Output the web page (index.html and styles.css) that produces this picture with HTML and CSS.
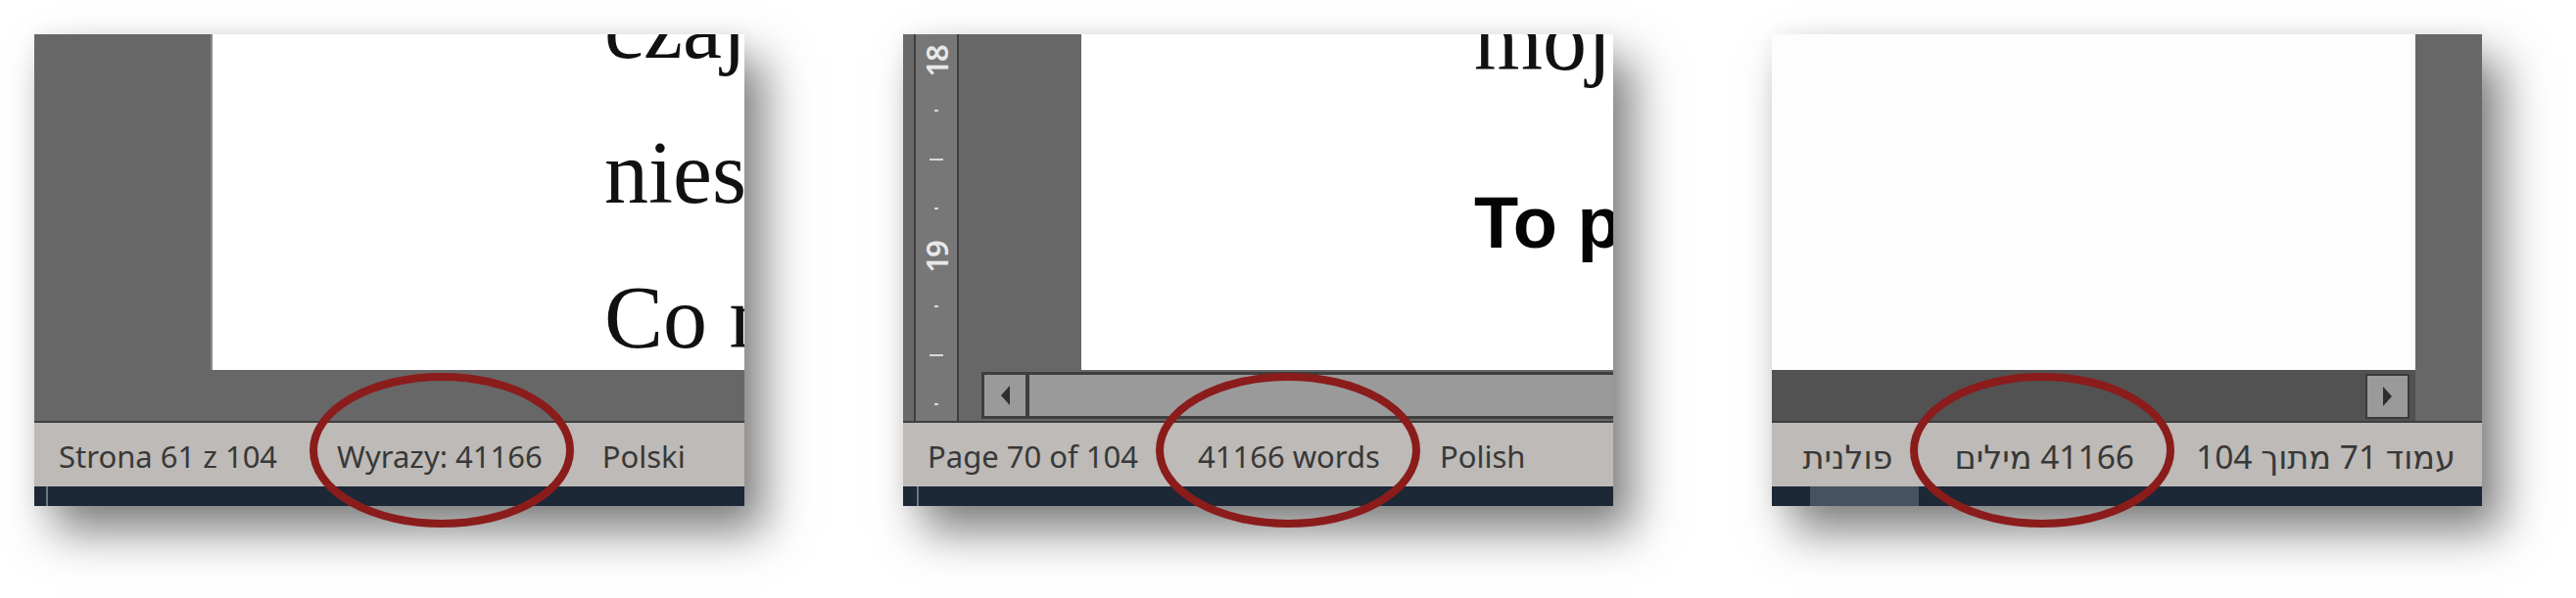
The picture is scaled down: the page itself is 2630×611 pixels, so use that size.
FILE: index.html
```html
<!DOCTYPE html>
<html lang="pl">
<head>
    <meta charset="UTF-8">
    <title>Word count in the status bar</title>
    <link rel="stylesheet" href="styles.css">
</head>
<body>

    <div class="strip">

        <!-- Polish UI -->
        <div class="shot">
            <div class="canvas canvas-pl">
                <div class="gutter"></div>
                <div class="page">
                    <p>czajnik</p>
                    <p>niespodziewanie</p>
                    <p>Co ma</p>
                </div>
                <div class="below"></div>
            </div>
            <div class="status">
                <span>Strona 61 z 104</span>
                <span>Wyrazy: 41166</span>
                <span>Polski</span>
            </div>
            <div class="taskbar"><i class="tick"></i></div>
            <svg class="ring" viewBox="0 0 270 158"><ellipse cx="135" cy="79" rx="131" ry="75"/></svg>
        </div>

        <!-- English UI -->
        <div class="shot">
            <div class="canvas canvas-en">
                <div class="edge"></div>
                <div class="ruler">
                    <span class="num">18</span>
                    <span class="dot"></span>
                    <span class="dash"></span>
                    <span class="dot"></span>
                    <span class="num">19</span>
                    <span class="dot"></span>
                    <span class="dash"></span>
                    <span class="dot"></span>
                </div>
                <div class="work">
                    <div class="work-top">
                        <div class="gutter-en"></div>
                        <div class="page">
                            <p>mojego</p>
                            <h4>To pytanie</h4>
                        </div>
                    </div>
                    <div class="work-bottom">
                        <div class="hscroll">
                            <div class="arrow arrow-left"></div>
                            <div class="track"></div>
                        </div>
                    </div>
                </div>
            </div>
            <div class="status">
                <span>Page 70 of 104</span>
                <span>41166 words</span>
                <span>Polish</span>
            </div>
            <div class="taskbar taskbar-en"><i class="tick"></i></div>
            <svg class="ring ring-en" viewBox="0 0 270 158"><ellipse cx="135" cy="79" rx="131" ry="75"/></svg>
        </div>

        <!-- Hebrew UI -->
        <div class="shot">
            <div class="canvas canvas-he">
                <div class="page blank"></div>
                <div class="gutter-he"></div>
                <div class="hscroll-he">
                    <div class="arrow arrow-right"></div>
                </div>
                <div class="corner-he"></div>
            </div>
            <div class="status status-he" dir="rtl">
                <span>עמוד 71 מתוך 104</span>
                <span>41166 מילים</span>
                <span>פולנית</span>
            </div>
            <div class="taskbar"><i class="task-btn"></i></div>
            <svg class="ring ring-he" viewBox="0 0 270 158"><ellipse cx="135" cy="79" rx="131" ry="75"/></svg>
        </div>

    </div>

</body>
</html>
```

FILE: styles.css
```css
html, body {
    height: 100%;
}
body {
    margin: 0;
    min-height: 611px;
    background-color: white;
}
.strip {
    display: flex;
    gap: 162px;
    padding: 35px 0 0 35px;
}
.shot {
    position: relative;
    width: 725px;
    flex: none;
    box-shadow: 20px 26px 44px rgba(0, 0, 0, 0.5), 0 0 18px rgba(0, 0, 0, 0.05);
}

/* document area */
.canvas {
    height: 395px;
    overflow: hidden;
    background-color: #676767;
    border-bottom: 2px solid #3e3e3e;
}
.page {
    height: 343px;
    background-color: white;
    overflow: hidden;
    padding-left: 400px;
    box-sizing: border-box;
}
.page p {
    margin: 0;
    font-family: "Liberation Serif", serif;
    font-size: 90px;
    line-height: 148px;
    color: #111;
    white-space: nowrap;
}
.page p:first-child {
    margin-top: -80px;
}

.canvas-pl {
    display: grid;
    grid-template-columns: 182px 1fr;
    grid-template-rows: 343px 1fr;
}
.canvas-pl .gutter {
    border-right: 2px solid #8a8a8a;
}
.canvas-pl .below {
    grid-column: 1 / 3;
}

/* english: ruler + scrollbar */
.canvas-en {
    display: flex;
}
.edge {
    width: 11px;
    flex: none;
    border-right: 2px solid #3e3e3e;
    background-color: #6a6a6a;
}
.ruler {
    width: 42px;
    flex: none;
    border-right: 2px solid #3e3e3e;
    background-color: #777;
    display: flex;
    flex-direction: column;
    align-items: center;
    padding-top: 3px;
}
.ruler span {
    height: 50px;
    flex: none;
    display: flex;
    align-items: center;
    justify-content: center;
}
.ruler .num {
    width: 42px;
    font-family: "Noto Sans", sans-serif;
    font-size: 31px;
    font-weight: 600;
    letter-spacing: -2px;
    color: #e8e8e8;
    transform: rotate(-90deg);
}
.ruler .dot::before,
.ruler .dash::before {
    content: "";
    display: block;
    height: 2px;
    background-color: #d8d8d8;
}
.ruler .dot::before {
    width: 4px;
}
.ruler .dash::before {
    width: 14px;
}
.work {
    flex: 1;
    min-width: 0;
    display: flex;
    flex-direction: column;
}
.work-top {
    display: flex;
    height: 343px;
}
.gutter-en {
    width: 125px;
    flex: none;
}
.work-top .page {
    flex: 1;
    min-width: 0;
    padding-left: 401px;
}
.page h4 {
    margin: 0;
    font-family: "Liberation Sans", Arial, sans-serif;
    font-weight: bold;
    font-size: 74px;
    line-height: 100px;
    margin-top: 63px;
    color: #050505;
    white-space: nowrap;
}
.work-top .page p:first-child {
    margin-top: -68px;
}
.work-bottom {
    flex: 1;
    padding: 2px 0 0 23px;
}
.hscroll {
    height: 48px;
    display: flex;
    gap: 4px;
    background-color: #3e3e3e;
    border: 3px solid #3e3e3e;
    border-right: none;
    box-sizing: border-box;
}
.arrow {
    width: 42px;
    flex: none;
    background-color: #9a9a9a;
    display: flex;
    align-items: center;
    justify-content: center;
}
.arrow::before {
    content: "";
    border-top: 10px solid transparent;
    border-bottom: 10px solid transparent;
}
.arrow-left::before {
    border-right: 9px solid #2e2e2e;
}
.arrow-right::before {
    border-left: 9px solid #2e2e2e;
}
.track {
    flex: 1;
    background-color: #9a9a9a;
}

/* hebrew: page on the left, scrollbar arrow on the right */
.canvas-he {
    display: grid;
    grid-template-columns: 657px 1fr;
    grid-template-rows: 343px 1fr;
}
.page.blank {
    background-color: #fdfdfd;
}
.hscroll-he {
    background-color: #525252;
    display: flex;
    justify-content: flex-end;
    padding: 4px 6px 2px 0;
}
.hscroll-he .arrow {
    width: 41px;
    border: 2px solid #3a3a3a;
}

/* status bar */
.status {
    height: 65px;
    display: flex;
    align-items: center;
    gap: 61px;
    padding: 2px 0 0 25px;
    box-sizing: border-box;
    background-color: #bdbab7;
    font-family: "Noto Sans", "DejaVu Sans", sans-serif;
    font-size: 31px;
    color: #383838;
    white-space: nowrap;
}
.status-he {
    padding: 2px 27px 0 0;
    gap: 63px;
    font-size: 33.5px;
}
.taskbar {
    position: relative;
    height: 20px;
    background-color: #1c2836;
}
.tick {
    display: block;
    width: 2px;
    height: 20px;
    margin-left: 12px;
    background-color: #6b7786;
}
.taskbar-en .tick {
    margin-left: 14px;
}
.task-btn {
    display: block;
    width: 111px;
    height: 20px;
    margin-left: 39px;
    background-color: #46525f;
}

/* red marker around the word count */
.ring {
    position: absolute;
    left: 281px;
    top: 346px;
    width: 270px;
    height: 158px;
    overflow: visible;
}
.ring ellipse {
    fill: none;
    stroke: #8b1c1c;
    stroke-width: 8;
}
.ring-en {
    left: 258px;
}
.ring-he {
    left: 141px;
}
```
